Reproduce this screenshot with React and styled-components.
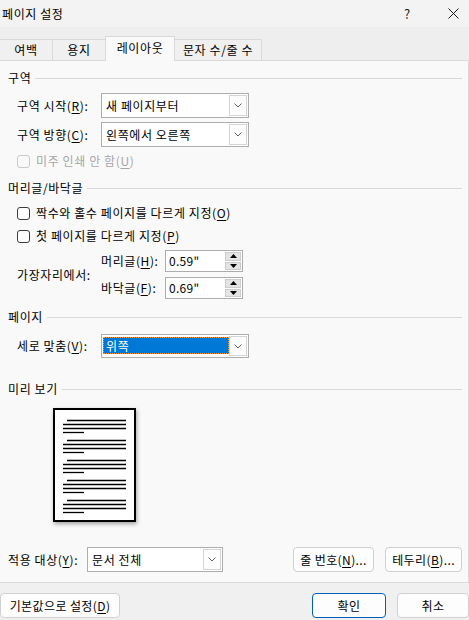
import React from 'react'
import styled, { createGlobalStyle } from 'styled-components'

const GlobalStyle = createGlobalStyle`
  html, body {
    margin: 0;
    padding: 0;
  }
  body {
    font-family: "Noto Sans CJK KR", "Noto Sans", sans-serif;
    font-size: 12px;
    line-height: 16px;
    letter-spacing: 0.6px;
    color: #000;
  }
  u {
    text-underline-offset: 2px;
  }
`;

const Window = styled.div`
  width: 469px;
  height: 620px;
  overflow: hidden;
  display: flex;
  flex-direction: column;
  background: #eeeeee;
`;

const TitleBar = styled.div`
  height: 27px;
  flex: none;
  display: flex;
  align-items: center;
  background: #f3f3f3;
  padding-left: 2px;
`;

const Title = styled.div`
  flex: 1;
`;

const TitleButton = styled.div`
  width: ${p => p.$w}px;
  margin-right: ${p => p.$mr || 0}px;
  display: flex;
  justify-content: center;
  align-items: center;
  font-size: 13px;
  color: #1a1a1a;
`;

const TabStrip = styled.div`
  height: 33px;
  flex: none;
  display: flex;
  align-items: flex-end;
`;

const Tab = styled.div`
  position: relative;
  width: ${p => p.$w}px;
  height: ${p => (p.$active ? 25 : 21)}px;
  margin-bottom: ${p => (p.$active ? -1 : 0)}px;
  margin-left: -1px;
  z-index: ${p => (p.$active ? 1 : 0)};
  box-sizing: border-box;
  border: 1px solid #d9d9d9;
  border-bottom: none;
  background: ${p => (p.$active ? '#f9f9f9' : '#f0f0f0')};
  display: flex;
  justify-content: center;
  align-items: ${p => (p.$active ? 'flex-start' : 'center')};
  padding-top: ${p => (p.$active ? 3 : 0)}px;
  &:first-child {
    margin-left: 0;
    border-left: none;
  }
`;

const Panel = styled.div`
  flex: 1;
  display: flex;
  flex-direction: column;
  background: #f9f9f9;
  border-top: 1px solid #d9d9d9;
  border-right: 1px solid #d9d9d9;
  border-bottom: 1px solid #d9d9d9;
  padding: 9px 6px 0 8px;
`;

const Heading = styled.div`
  display: flex;
  align-items: center;
  gap: 4px;
  height: 16px;
  margin-top: ${p => p.$mt || 0}px;
  &::after {
    content: '';
    flex: 1;
    height: 1px;
    background: #d8d8d8;
  }
`;

const Block = styled.div`
  display: flex;
  flex-direction: column;
  padding-left: 9px;
`;

const Row = styled.div`
  display: flex;
  align-items: center;
  height: ${p => p.$h || 25}px;
  margin-top: ${p => p.$mt || 0}px;
`;

const Label = styled.div`
  width: ${p => p.$w}px;
  flex: none;
  white-space: nowrap;
`;

const Combo = styled.div`
  width: ${p => p.$w}px;
  height: ${p => p.$h || 25}px;
  box-sizing: border-box;
  border: 1px solid #adadad;
  background: #fff;
  display: flex;
  align-items: stretch;
`;

const ComboText = styled.div`
  flex: 1;
  display: flex;
  align-items: center;
  padding-left: 4px;
`;

const Selection = styled.div`
  flex: 1;
  display: flex;
  align-items: center;
  margin: 2px 0 3px 1px;
  padding-left: 2px;
  background: #0078d7;
  color: #fff;
  border: 1px dotted #f09a3c;
`;

const DropButton = styled.div`
  width: 16px;
  flex: none;
  margin: 1px 1px 1px 0;
  border: 1px solid #d4d4d4;
  background: #fdfdfd;
  display: flex;
  align-items: center;
  justify-content: center;
`;

const CheckRow = styled.div`
  display: flex;
  align-items: center;
  gap: 6px;
  height: 18px;
  margin-top: ${p => p.$mt || 0}px;
  color: ${p => (p.$disabled ? '#a6a6a6' : '#000')};
`;

const Box = styled.span`
  width: 13px;
  height: 13px;
  box-sizing: border-box;
  border: 1px solid ${p => (p.$disabled ? '#c9c9c9' : '#3c3c3c')};
  border-radius: 3px;
  background: ${p => (p.$disabled ? '#f9f9f9' : '#fff')};
`;

const MarginGroup = styled.div`
  display: flex;
  align-items: center;
  margin-top: 5px;
`;

const SpinList = styled.div`
  display: flex;
  flex-direction: column;
  gap: 5px;
`;

const SpinBox = styled.div`
  width: 78px;
  height: 22px;
  box-sizing: border-box;
  border: 1px solid #adadad;
  background: #fff;
  display: flex;
`;

const SpinValue = styled.div`
  flex: 1;
  display: flex;
  align-items: center;
  padding-left: 3px;
  letter-spacing: 0.3px;
`;

const SpinButtons = styled.div`
  width: 16px;
  display: flex;
  flex-direction: column;
  gap: 1px;
  margin: 1px 1px 1px 0;
`;

const SpinButton = styled.div`
  flex: 1;
  background: #e4e4e4;
  border: 1px solid #cdcdcd;
  display: flex;
  align-items: center;
  justify-content: center;
`;

const Preview = styled.div`
  margin: 11px 0 0 45px;
  width: 83px;
  height: 114px;
  box-sizing: border-box;
  border: 2px solid #000;
  background: #fff;
  box-shadow: 1px 2px 4px rgba(0, 0, 0, 0.35);
`;

const ButtonGroup = styled.div`
  display: flex;
  gap: 11px;
  margin-left: auto;
`;

const Button = styled.div`
  width: ${p => p.$w}px;
  height: 25px;
  box-sizing: border-box;
  border: 1px solid ${p => (p.$primary ? '#005fb8' : '#d0d0d0')};
  border-radius: 4px;
  background: #fdfdfd;
  display: flex;
  align-items: center;
  justify-content: center;
  white-space: nowrap;
  letter-spacing: 0.4px;
`;

const Footer = styled.div`
  height: 37px;
  flex: none;
  box-sizing: border-box;
  padding-top: 10px;
  display: flex;
  align-items: flex-start;
  background: #f0f0f0;
`;

const Chevron = () => (
  <svg width="8" height="5" viewBox="0 0 8 5">
    <polyline points="0.5,0.5 4,4 7.5,0.5" fill="none" stroke="#606060" strokeWidth="1" />
  </svg>
);

const Arrow = ({ up }) => (
  <svg width="7" height="4" viewBox="0 0 7 4">
    <polygon points={up ? '0,4 3.5,0 7,4' : '0,0 3.5,4 7,0'} fill="#000" />
  </svg>
);

const CloseIcon = () => (
  <svg width="11" height="11" viewBox="0 0 11 11">
    <path d="M0.5 0.5 L10.5 10.5 M10.5 0.5 L0.5 10.5" stroke="#1a1a1a" strokeWidth="1" />
  </svg>
);

const Select = ({ w, h, children, selected }) => (
  <Combo $w={w} $h={h}>
    {selected ? <Selection>{children}</Selection> : <ComboText>{children}</ComboText>}
    <DropButton><Chevron /></DropButton>
  </Combo>
);

const Spin = ({ value }) => (
  <SpinBox>
    <SpinValue>{value}</SpinValue>
    <SpinButtons>
      <SpinButton><Arrow up /></SpinButton>
      <SpinButton><Arrow /></SpinButton>
    </SpinButtons>
  </SpinBox>
);

// thumbnail of a page: five paragraphs, first line indented
const PageLines = () => (
  <svg width="79" height="110" viewBox="0 0 79 110">
    {[0, 1, 2, 3, 4].map(i => {
      const y = 10.5 + i * 20;
      return (
        <g key={i} stroke="#000" strokeWidth="1.3">
          <line x1="12" y1={y} x2="71" y2={y} />
          <line x1="8" y1={y + 4} x2="71" y2={y + 4} />
          <line x1="8" y1={y + 8} x2="71" y2={y + 8} />
          <line x1="8" y1={y + 12} x2="29" y2={y + 12} />
        </g>
      );
    })}
  </svg>
);

export default function App() {
  return (
    <Window>
      <GlobalStyle />
      <TitleBar>
        <Title>페이지 설정</Title>
        <TitleButton $w={45} $mr={7}>?</TitleButton>
        <TitleButton $w={32}><CloseIcon /></TitleButton>
      </TitleBar>

      <TabStrip>
        <Tab $w={53}>여백</Tab>
        <Tab $w={54}>용지</Tab>
        <Tab $w={70} $active>레이아웃</Tab>
        <Tab $w={88}>문자 수/줄 수</Tab>
      </TabStrip>

      <Panel>
        <Heading>구역</Heading>
        <Block>
          <Row $mt={7}>
            <Label $w={84}>구역 시작(<u>R</u>):</Label>
            <Select w={148}>새 페이지부터</Select>
          </Row>
          <Row $mt={4}>
            <Label $w={84}>구역 방향(<u>C</u>):</Label>
            <Select w={148}>왼쪽에서 오른쪽</Select>
          </Row>
          <CheckRow $mt={5} $disabled>
            <Box $disabled />
            <span>미주 인쇄 안 함(<u>U</u>)</span>
          </CheckRow>
        </Block>

        <Heading $mt={10}>머리글/바닥글</Heading>
        <Block>
          <CheckRow $mt={8}>
            <Box />
            <span>짝수와 홀수 페이지를 다르게 지정(<u>O</u>)</span>
          </CheckRow>
          <CheckRow $mt={5}>
            <Box />
            <span>첫 페이지를 다르게 지정(<u>P</u>)</span>
          </CheckRow>
          <MarginGroup>
            <Label $w={84}>가장자리에서:</Label>
            <SpinList>
              <Row $h={22}>
                <Label $w={64}>머리글(<u>H</u>):</Label>
                <Spin value={'0.59"'} />
              </Row>
              <Row $h={22}>
                <Label $w={64}>바닥글(<u>F</u>):</Label>
                <Spin value={'0.69"'} />
              </Row>
            </SpinList>
          </MarginGroup>
        </Block>

        <Heading $mt={10}>페이지</Heading>
        <Block>
          <Row $mt={9} $h={24}>
            <Label $w={84}>세로 맞춤(<u>V</u>):</Label>
            <Select w={148} h={24} selected>위쪽</Select>
          </Row>
        </Block>

        <Heading $mt={23}>미리 보기</Heading>
        <Preview>
          <PageLines />
        </Preview>

        <Row $mt={25}>
          <Label $w={79}>적용 대상(<u>Y</u>):</Label>
          <Select w={136}>문서 전체</Select>
          <ButtonGroup>
            <Button $w={81}><span>줄 번호(<u>N</u>)...</span></Button>
            <Button $w={77}><span>테두리(<u>B</u>)...</span></Button>
          </ButtonGroup>
        </Row>
      </Panel>

      <Footer>
        <Button $w={120}><span>기본값으로 설정(<u>D</u>)</span></Button>
        <ButtonGroup>
          <Button $w={74} $primary>확인</Button>
          <Button $w={72}>취소</Button>
        </ButtonGroup>
      </Footer>
    </Window>
  );
}
